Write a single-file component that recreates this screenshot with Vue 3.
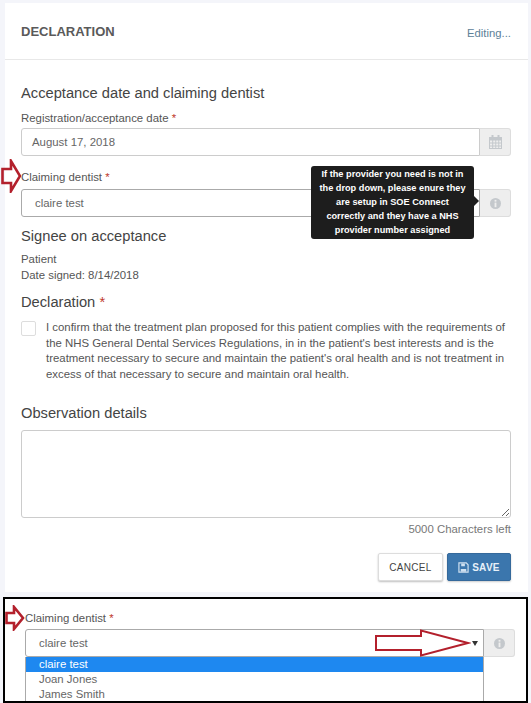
<script setup>
const options = ['claire test', 'Joan Jones', 'James Smith']
const declaration = "I confirm that the treatment plan proposed for this patient complies with the requirements of the NHS General Dental Services Regulations, in in the patient's best interests and is the treatment necessary to secure and maintain the patient's oral health and is not treatment in excess of that necessary to secure and maintain oral health."
</script>

<template>
  <div class="page">
    <section class="card">
      <header class="card-head">
        <h2>DECLARATION</h2>
        <span class="editing">Editing...</span>
      </header>

      <div class="card-body">
        <h3 class="first">Acceptance date and claiming dentist</h3>
        <label class="lbl">Registration/acceptance date <i>*</i></label>
        <div class="group">
          <div class="control">August 17, 2018</div>
          <span class="addon">
            <svg width="13" height="14" viewBox="0 0 13 14" fill="#c4c8cc">
              <rect x="2.5" y="0" width="2" height="3" />
              <rect x="8.5" y="0" width="2" height="3" />
              <path d="M0 2h13v12H0zM1 5.5v2h2.2v-2zm3.2 0v2h2.1v-2zm3 0v2h2.1v-2zm3 0v2H12v-2zM1 8.5v2h2.2v-2zm3.2 0v2h2.1v-2zm3 0v2h2.1v-2zm3 0v2H12v-2zM1 11.5V13h2.2v-1.500zm3.200 0V13h2.100v-1.500zm3 0V13h2.100v-1.500zm3 0V13H12v-1.500z" fill-rule="evenodd" />
            </svg>
          </span>
        </div>

        <div class="dentist">
          <label class="lbl">Claiming dentist <i>*</i></label>
          <div class="group">
            <div class="control select">claire test</div>
            <span class="addon">
              <svg class="info" width="11" height="11" viewBox="0 0 12 12">
                <circle cx="6" cy="6" r="6" fill="#c4c8cc" />
                <rect x="5" y="2" width="2" height="2" fill="#eee" />
                <rect x="5" y="5" width="2" height="5" fill="#eee" />
              </svg>
            </span>
          </div>
          <svg class="mark mark-top" width="20" height="34" viewBox="0 0 20 34">
            <path d="M1.500 10H10V2l9 15-9 15v-8H1.500z" fill="none" stroke="#b3202c" stroke-width="2.600" />
          </svg>
          <div class="tip">
            If the provider you need is not in the drop down, please enure they are setup in SOE Connect correctly and they have a NHS provider number assigned
            <span class="tip-nub"></span>
          </div>
        </div>

        <h3 class="signee">Signee on acceptance</h3>
        <p class="signed">Patient<br />Date signed: 8/14/2018</p>

        <h3 class="decl">Declaration <i>*</i></h3>
        <div class="confirm">
          <span class="box"></span>
          <p>{{ declaration }}</p>
        </div>

        <h3 class="obs">Observation details</h3>
        <textarea class="notes"></textarea>
        <div class="left">5000 Characters left</div>

        <div class="actions">
          <button class="btn cancel">CANCEL</button>
          <button class="btn save">
            <svg width="11" height="11" viewBox="0 0 12 12">
              <path d="M1 1h8l2 2v8H1z" fill="none" stroke="#cfe0f0" stroke-width="1.300" />
              <path d="M3.500 1.500h4v3h-4zM3 7.500h6v3H3z" fill="#cfe0f0" />
            </svg>
            SAVE
          </button>
        </div>
      </div>
    </section>

    <section class="inset">
      <label class="lbl">Claiming dentist <i>*</i></label>
      <div class="group">
        <div class="control select open">
          claire test
          <span class="caret"></span>
        </div>
        <span class="addon">
          <svg class="info" width="11" height="11" viewBox="0 0 12 12">
            <circle cx="6" cy="6" r="6" fill="#c4c8cc" />
            <rect x="5" y="2" width="2" height="2" fill="#eee" />
            <rect x="5" y="5" width="2" height="5" fill="#eee" />
          </svg>
        </span>
      </div>
      <ul class="drop">
        <li v-for="(opt, i) in options" :key="opt" :class="{ on: i === 0 }">{{ opt }}</li>
      </ul>
      <svg class="mark mark-small" width="20" height="26" viewBox="0 0 20 26">
        <path d="M1.500 8H9V2l9 11-9 11v-6H1.500z" fill="none" stroke="#b3202c" stroke-width="2.600" />
      </svg>
      <svg class="mark mark-big" width="96" height="28" viewBox="0 0 96 28">
        <path d="M1 7h45V1.500L93 14 46 26.500V21H1z" fill="none" stroke="#b3202c" stroke-width="2" />
      </svg>
    </section>
  </div>
</template>

<style>
html, body {
  margin: 0;
  background: #f4f5fa;
}
</style>

<style scoped>
.page {
  width: 531px;
  height: 703px;
  overflow: hidden;
  box-sizing: border-box;
  padding-top: 3px;
  background: #f4f5fa;
  font-family: "Liberation Sans", Arial, sans-serif;
  font-size: 11.400px;
  color: #555;
}

.card {
  margin: 0 3px 0 5px;
  height: 589px;
  background: #fff;
}

.card-head {
  display: flex;
  justify-content: space-between;
  align-items: center;
  height: 56px;
  padding: 0 17px 0 16px;
  border-bottom: 1px solid #e8e8e8;
}

h2 {
  margin: 0;
  font-size: 13px;
  font-weight: bold;
  color: #5a5a5a;
}

.editing {
  font-size: 11.300px;
  color: #5d8198;
  padding-top: 3px;
}

.card-body {
  padding: 0 17px 0 16px;
}

h3 {
  margin: 0;
  font-size: 14.700px;
  font-weight: normal;
  line-height: 20px;
  color: #444;
}

i {
  font-style: normal;
  color: #c0392b;
}

.first {
  padding-top: 23px;
}

.lbl {
  display: block;
  margin-top: 7px;
  line-height: 16px;
  font-size: 11.400px;
}

.group {
  display: flex;
  height: 28px;
  margin-top: 2px;
}

.control {
  flex: 1;
  box-sizing: border-box;
  display: flex;
  align-items: center;
  padding-left: 10px;
  background: #fff;
  border: 1px solid #ccc;
  border-radius: 3px 0 0 3px;
  font-size: 11.400px;
  color: #666;
}

.select {
  padding-left: 13px;
  border-color: #aaa;
  position: relative;
}

.addon {
  width: 31px;
  box-sizing: border-box;
  display: flex;
  align-items: center;
  justify-content: center;
  background: #eee;
  border: 1px solid #ddd;
  border-left: 0;
  border-radius: 0 3px 3px 0;
}

.dentist {
  position: relative;
  margin-top: 13px;
}

.dentist .group {
  margin-top: 4px;
}

.mark {
  position: absolute;
  pointer-events: none;
}

.mark-top {
  left: -20px;
  top: -10px;
}

.tip {
  position: absolute;
  left: 290px;
  top: -3px;
  width: 163px;
  height: 73px;
  box-sizing: border-box;
  padding: 1px 8px;
  background: #1d1d1d;
  border-radius: 3px;
  color: #fff;
  font-size: 9.200px;
  font-weight: bold;
  line-height: 14px;
  text-align: center;
}

.tip-nub {
  position: absolute;
  right: -5px;
  top: 30px;
  border-left: 5px solid #1d1d1d;
  border-top: 5px solid transparent;
  border-bottom: 5px solid transparent;
}

.signee {
  margin-top: 9px;
}

.signed {
  margin: 5px 0 0;
  font-size: 11.400px;
  line-height: 16px;
}

.decl {
  margin-top: 9px;
}

.confirm {
  display: flex;
  margin-top: 9px;
  gap: 10px;
}

.box {
  flex: none;
  width: 15px;
  height: 15px;
  box-sizing: border-box;
  border: 1px solid #ddd;
  border-radius: 2px;
}

.confirm p {
  margin: -1px 0 0;
  font-size: 11.400px;
  line-height: 15.600px;
  color: #555;
}

.obs {
  margin-top: 21px;
}

.notes {
  display: block;
  box-sizing: border-box;
  width: 100%;
  height: 88px;
  margin-top: 7px;
  border: 1px solid #ccc;
  border-radius: 3px;
  background: #fff;
  outline: none;
}

.left {
  margin-top: 3px;
  text-align: right;
  font-size: 11.400px;
  line-height: 16px;
  color: #777;
}

.actions {
  display: flex;
  justify-content: flex-end;
  gap: 4px;
  margin-top: 16px;
}

.btn {
  height: 28px;
  box-sizing: border-box;
  border-radius: 2px;
  font-family: inherit;
  font-size: 10px;
  letter-spacing: 0.300px;
  display: flex;
  align-items: center;
  justify-content: center;
  gap: 3px;
  padding: 0;
}

.cancel {
  width: 65px;
  background: #fff;
  border: 1px solid #ddd;
  color: #444;
  box-shadow: 0 1px 2px rgba(0, 0, 0, 0.25);
}

.save {
  width: 64px;
  background: #3b76ad;
  border: 1px solid #35699b;
  color: #e8f0f8;
  font-weight: bold;
  box-shadow: 0 1px 2px rgba(0, 0, 0, 0.2);
}

.inset {
  position: relative;
  box-sizing: border-box;
  margin: 5px 3px 0 3px;
  height: 106px;
  padding: 6px 11px 0 20px;
  background: #fff;
  border: 2px solid #000;
  overflow: hidden;
}

.inset .lbl {
  margin-top: 5px;
}

.inset .group {
  margin-top: 3px;
}

.caret {
  position: absolute;
  right: 5px;
  top: 11px;
  border-top: 5px solid #333;
  border-left: 3px solid transparent;
  border-right: 3px solid transparent;
}

.drop {
  list-style: none;
  margin: 0 31px 0 0;
  padding: 0;
  border-left: 1px solid #aaa;
  border-right: 1px solid #aaa;
  font-size: 11.400px;
  line-height: 15px;
  color: #666;
}

.drop li {
  padding-left: 13px;
}

.drop .on {
  background: #1e88f0;
  color: #fff;
}

.mark-small {
  left: 0;
  top: 6px;
}

.mark-big {
  left: 370px;
  top: 30px;
}
</style>
